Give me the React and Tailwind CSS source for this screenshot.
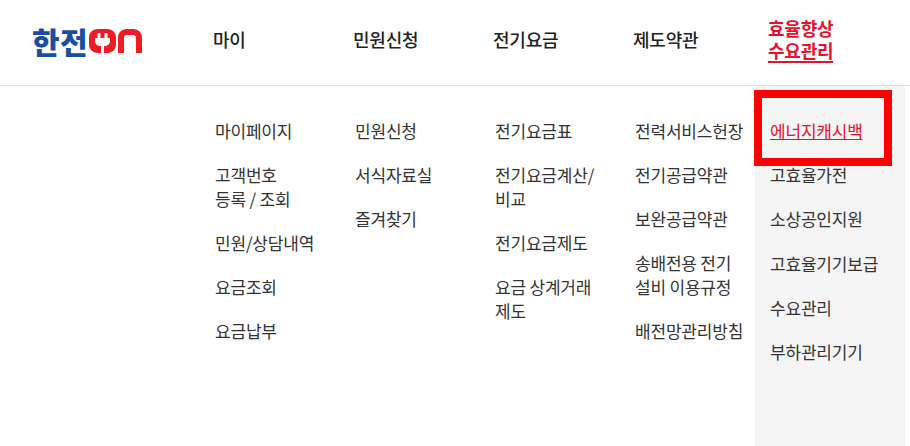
const font = { fontFamily: '"Noto Sans CJK KR", "Noto Sans", sans-serif' };

const columns = [
  {
    title: ["마이"],
    items: [["마이페이지"], ["고객번호", "등록 / 조회"], ["민원/상담내역"], ["요금조회"], ["요금납부"]],
  },
  { title: ["민원신청"], items: [["민원신청"], ["서식자료실"], ["즐겨찾기"]] },
  {
    title: ["전기요금"],
    items: [["전기요금표"], ["전기요금계산/", "비교"], ["전기요금제도"], ["요금 상계거래", "제도"]],
  },
  {
    title: ["제도약관"],
    items: [["전력서비스헌장"], ["전기공급약관"], ["보완공급약관"], ["송배전용 전기", "설비 이용규정"], ["배전망관리방침"]],
  },
];

const last = [["에너지캐시백"], ["고효율가전"], ["소상공인지원"], ["고효율기기보급"], ["수요관리"], ["부하관리기기"]];

function Item({ lines, active }) {
  return (
    <li className={"text-[17px] leading-[24px] tracking-[-0.2px] whitespace-nowrap " + (active ? "text-[#e8112d] underline" : "text-[#333333]")}>
      {lines.map((l, i) => (
        <span key={l}>
          {i > 0 && <br />}
          {l}
        </span>
      ))}
    </li>
  );
}

function OnMark() {
  return (
    <svg width="53" height="24" viewBox="0 0 53 24" className="block shrink-0">
      <path
        d="M9 0H18C23.500 0 27 3.500 27 9V15C27 20.500 23.500 24 18 24H9C3.500 24 0 20.500 0 15V9C0 3.500 3.500 0 9 0Z"
        fill="#ee1c25"
      />
      <rect x="8.500" y="4" width="3" height="5" fill="#fff" />
      <rect x="15.500" y="4" width="3" height="5" fill="#fff" />
      <path d="M6 9H21V12C21 15 18.500 17 15 17V24H12V17C8.500 17 6 15 6 12Z" fill="#fff" />
      <path
        d="M29 24V9C29 3.500 32.500 0 38 0H44C49.500 0 53 3.500 53 9V24H47V9C47 7 46 6 44 6H38C36 6 35 7 35 9V24Z"
        fill="#ee1c25"
      />
    </svg>
  );
}

export default function App() {
  return (
    <div className="relative w-[910px] h-[446px] overflow-hidden bg-white" style={font}>
      <header className="flex h-[86px] border-b border-[#dfdfe6]">
        <div className="w-[213px] shrink-0 pl-[32px] flex items-center gap-[1px] pb-[3px]">
          <span className="text-[30px] leading-none font-black text-[#1a4f9f] tracking-[0.5px] whitespace-nowrap">한전</span>
          <OnMark />
        </div>
        {columns.map((c) => (
          <div key={c.title[0]} className="w-[140px] shrink-0 flex items-center pb-[6px] text-[18px] font-medium text-[#222222] tracking-[-0.2px]">
            {c.title[0]}
          </div>
        ))}
        <div className="-ml-[5px] flex items-center pb-[6px]">
          <div className="text-[18px] leading-[22px] font-bold text-[#e8112d] border-b-2 border-[#e8112d] tracking-[-0.2px] whitespace-nowrap">
            효율향상
            <br />
            수요관리
          </div>
        </div>
      </header>
      <div className="flex h-[360px]">
        <div className="w-[215px] shrink-0" />
        {columns.map((c) => (
          <ul key={c.title[0]} className="w-[140px] shrink-0 pt-[33px] flex flex-col gap-[20px]">
            {c.items.map((lines) => (
              <Item key={lines[0]} lines={lines} />
            ))}
          </ul>
        ))}
        <ul className="-ml-[20px] w-[150px] shrink-0 bg-[#f5f5f5] pt-[33px] pl-[15px] flex flex-col gap-[20.2px]">
          {last.map((lines, i) => (
            <Item key={lines[0]} lines={lines} active={i === 0} />
          ))}
        </ul>
      </div>
      <div className="absolute left-[754px] top-[90px] w-[138px] h-[76px] border-[8px] border-[#ff0000]" />
    </div>
  );
}
